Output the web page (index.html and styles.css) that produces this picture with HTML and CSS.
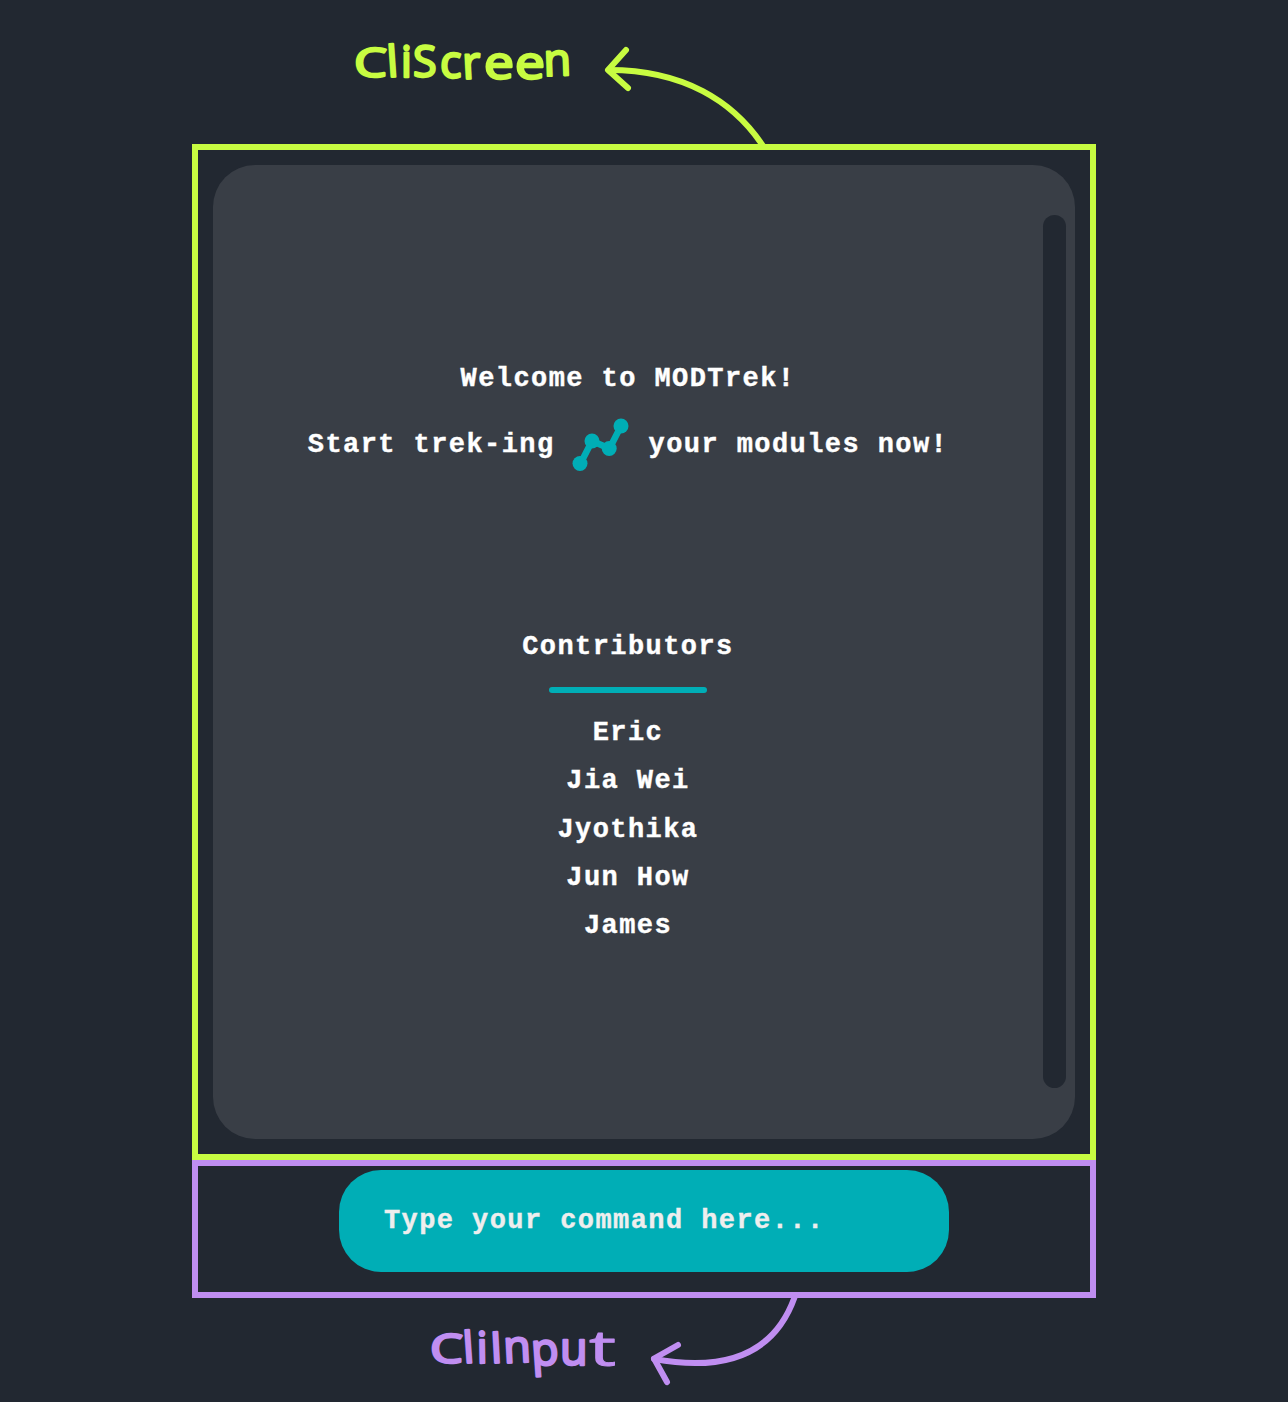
FILE: index.html
```html
<!DOCTYPE html>
<html lang="en">
<head>
<meta charset="utf-8">
<title>MODTrek CLI</title>
<link rel="stylesheet" href="styles.css">
</head>
<body>
<svg class="note note-screen" width="1288" height="144" viewBox="0 0 1288 144">
  <text class="label" y="77"><tspan class="big" x="354" textLength="33" lengthAdjust="spacingAndGlyphs">C</tspan><tspan class="cap" x="388 401 413" rotate="-4 0 0">liS</tspan><tspan x="440 463" y="78 79" rotate="0 -3">cr</tspan><tspan x="484" y="79" textLength="30" lengthAdjust="spacingAndGlyphs">e</tspan><tspan x="515" y="79" textLength="30" lengthAdjust="spacingAndGlyphs">e</tspan><tspan x="544" y="76" rotate="-2">n</tspan></text>
  <path class="arrow" d="M765 149C734 100 682 70 609 70"/>
  <path class="arrow" d="M626 50L608 70L628 88"/>
</svg>
<main class="cli">
  <section class="screen-frame">
    <div class="screen">
      <div class="content">
        <p class="line">Welcome to MODTrek!</p>
        <div class="trek">
          <span class="line">Start trek-ing</span>
          <svg class="logo" width="58" height="54" viewBox="1 0 58 54">
            <path d="M8.500 45.500L20 23L37.500 30.500L49 8"/>
            <circle cx="8" cy="45.500" r="7.500"/><circle cx="20" cy="23" r="7.500"/><circle cx="37.200" cy="30.500" r="7.500"/><circle cx="49" cy="8" r="7.500"/>
          </svg>
          <span class="line">your modules now!</span>
        </div>
        <h2 class="line heading">Contributors</h2>
        <div class="rule"></div>
        <ul class="names">
          <li class="line">Eric</li>
          <li class="line">Jia Wei</li>
          <li class="line">Jyothika</li>
          <li class="line">Jun How</li>
          <li class="line">James</li>
        </ul>
      </div>
      <div class="scrollbar"></div>
    </div>
  </section>
  <section class="input-frame">
    <div class="command line">Type your command here...</div>
  </section>
</main>
<svg class="note note-input" width="1288" height="104" viewBox="0 0 1288 104">
  <text class="label" y="65"><tspan class="big" x="430" textLength="33" lengthAdjust="spacingAndGlyphs">C</tspan><tspan class="cap" x="464 477 491" rotate="-4 -1 -3">liI</tspan><tspan x="504 532 560" y="65 68 67" rotate="-3 -4 0">npu</tspan><tspan class="tall" x="589" y="68" textLength="27" lengthAdjust="spacingAndGlyphs">t</tspan></text>
  <path class="arrow" d="M796 -5C779 48 736 76 654 61"/>
  <path class="arrow" d="M678 47L654 60.500L667 84"/>
</svg>
</body>
</html>
```
FILE: styles.css
```css
* { box-sizing: border-box; }
body {
  margin: 0;
  width: 1288px;
  height: 1402px;
  overflow: hidden;
  background: #222831;
  display: flex;
  flex-direction: column;
  align-items: center;
}
.note { display: block; flex: none; }
.note-screen { --ink: #c8fc41; }
.note-input { --ink: #c08ef1; }
.label {
  font-family: "Open Sans", sans-serif;
  font-size: 45px;
  fill: var(--ink);
  stroke: var(--ink);
  stroke-width: 2.4;
  stroke-linejoin: round;
}
.label .cap { font-size: 43px; }
.label .big { font-size: 41px; }
.label .tall { font-size: 50px; stroke-width: 1; }
.arrow {
  fill: none;
  stroke: var(--ink);
  stroke-width: 6;
  stroke-linecap: round;
  stroke-linejoin: round;
}
.cli { width: 904px; flex: none; }
.screen-frame {
  height: 1016px;
  border: 6px solid #c8fc41;
  padding: 15px;
}
.screen {
  display: flex;
  width: 862px;
  height: 974px;
  border-radius: 42px;
  background: #393e46;
}
.content {
  width: 830px;
  padding-top: 190px;
  display: flex;
  flex-direction: column;
  align-items: center;
}
.line {
  margin: 0;
  font: bold 27px/48.3px "Liberation Mono", monospace;
  letter-spacing: 1.42px;
  color: #fff;
  white-space: pre;
  -webkit-text-stroke: 0.4px currentColor;
}
.trek {
  display: flex;
  align-items: center;
  gap: 18px;
  height: 54px;
  margin-top: 15px;
}
.logo { fill: #00aeb6; overflow: visible; }
.logo path { fill: none; stroke: #00aeb6; stroke-width: 6.5; }
.heading { margin-top: 151px; }
.rule {
  width: 158px;
  height: 6px;
  margin: 15px 0 16.5px;
  border-radius: 3px;
  background: #00aeb6;
}
.names {
  margin: 0;
  padding: 0;
  list-style: none;
  text-align: center;
}
.scrollbar {
  width: 23px;
  height: 873px;
  margin-top: 50px;
  border-radius: 12px;
  background: #222831;
}
.input-frame {
  height: 138px;
  border: 6px solid #c08ef1;
  padding-top: 4px;
}
.command {
  width: 610px;
  height: 101.5px;
  margin: 0 auto;
  padding-left: 45px;
  line-height: 102px;
  border-radius: 42px;
  background: #00aeb6;
  color: #eee;
}
```
